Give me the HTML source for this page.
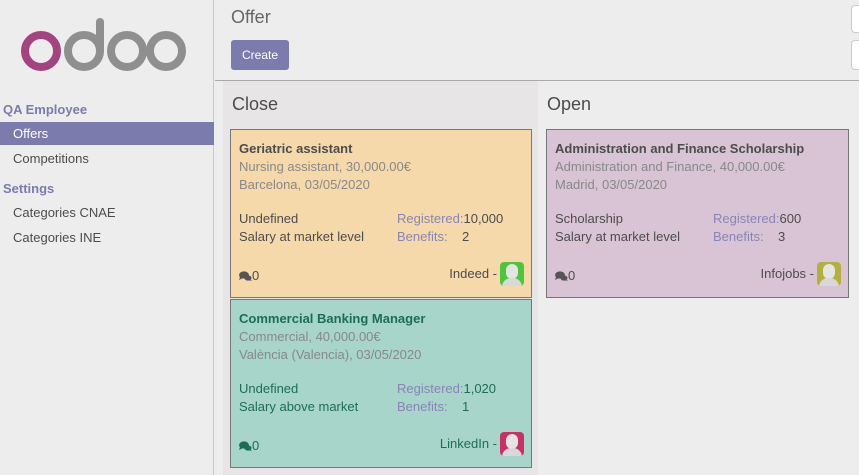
<!DOCTYPE html>
<html><head><meta charset="utf-8"><style>
*{box-sizing:border-box;margin:0;padding:0}
body{width:859px;height:475px;overflow:hidden;background:#eeedee;font-family:"Liberation Sans",sans-serif;font-size:13px;color:#4c4c4c;position:relative}
.side{position:absolute;left:0;top:0;width:214px;height:475px;border-right:1px solid #c9c9c9}
.sec{position:absolute;left:3px;font-weight:bold;color:#7c7bad;font-size:13px}
.item{position:absolute;left:13px;font-size:13px;color:#4c4c4c}
.act{position:absolute;left:0;top:122px;width:214px;height:23px;background:#7c7bad}
.hdr{position:absolute;left:215px;top:0;right:0;height:81px;border-bottom:1px solid #a9a9a9}
.btn{position:absolute;left:16px;top:40px;width:58px;height:30px;background:#7c7bad;color:#fff;border-radius:3px;font-size:12px;line-height:30px;text-align:center}
.col{position:absolute;top:81px;height:394px}
.col h2{position:absolute;left:9px;top:13px;font-size:18px;font-weight:normal;color:#4c4c4c}
.card{position:absolute;border:1px solid #777;padding:10px 8px;line-height:18px}
.card b{display:block;font-size:13px}
.g{color:#888}
.l{color:#8a84b6}
.row{position:absolute;left:8px}
.foot{position:absolute;left:8px;bottom:12px;display:flex;align-items:center}
.src{position:absolute;right:7px;bottom:11px;display:flex;align-items:center;gap:3px}
.av{width:24px;height:24px;border-radius:4px;position:relative;overflow:hidden}
.av i{position:absolute;left:6px;top:2px;width:12px;height:15px;border-radius:6px;background:#e4e4e4}
.av u{position:absolute;left:2px;top:16px;width:20px;height:12px;border-radius:9px 9px 0 0;background:#d8d8d8}
</style></head><body>
<div class="side">
<svg style="position:absolute;left:20px;top:18px" width="170" height="55" viewBox="0 0 170 55">
<circle cx="21" cy="33" r="16" fill="none" stroke="#a3437f" stroke-width="8"/>
<circle cx="64" cy="33" r="16" fill="none" stroke="#8f8f8f" stroke-width="8"/>
<line x1="80" y1="4" x2="80" y2="33" stroke="#8f8f8f" stroke-width="8" stroke-linecap="round"/>
<circle cx="107" cy="33" r="16" fill="none" stroke="#8f8f8f" stroke-width="8"/>
<circle cx="146" cy="33" r="16" fill="none" stroke="#8f8f8f" stroke-width="8"/>
</svg>
<div class="sec" style="top:102px">QA Employee</div>
<div class="act"></div>
<div class="item" style="top:126px;color:#fff">Offers</div>
<div class="item" style="top:151px">Competitions</div>
<div class="sec" style="top:181px">Settings</div>
<div class="item" style="top:205px">Categories CNAE</div>
<div class="item" style="top:230px">Categories INE</div>
</div>
<div class="hdr">
<div style="position:absolute;left:16px;top:7px;font-size:18px;color:#666">Offer</div>
<div class="btn">Create</div>
<div style="position:absolute;left:636px;top:5px;width:20px;height:28px;border:1px solid #ccc;border-right:none;border-radius:4px 0 0 4px;background:#fff"></div>
<div style="position:absolute;left:636px;top:40px;width:20px;height:30px;border:1px solid #ccc;border-right:none;border-radius:4px 0 0 4px;background:#fff"></div>
</div>
<div class="col" style="left:223px;width:315px;background:#e7e5e5"><h2>Close</h2>
<div class="card" style="left:7px;top:48px;width:302px;height:169px;background:#f5d9ab">
<b>Geriatric assistant</b><div class="g">Nursing assistant, 30,000.00€</div><div class="g">Barcelona, 03/05/2020</div>
<div class="row" style="top:80px">Undefined<br>Salary at market level</div>
<div class="row" style="left:166px;top:80px"><span class="l">Registered:</span>10,000<br><span class="l">Benefits:</span>&nbsp;&nbsp;&nbsp; 2</div>
<div class="foot"><svg width="13" height="11" viewBox="0 0 13 11"><ellipse cx="5" cy="4" rx="5" ry="3.6" fill="#555"/><path d="M1 6 L0 9 L4 7Z" fill="#555"/><ellipse cx="9" cy="7" rx="3.5" ry="2.6" fill="#555"/><path d="M11 8 L13 10 L9 9Z" fill="#555"/></svg>0</div>
<div class="src">Indeed -<div class="av" style="background:#4ec63c"><i></i><u></u></div></div>
</div>
<div class="card" style="left:7px;top:218px;width:302px;height:169px;background:#a7d5c9;color:#1b6e54">
<b>Commercial Banking Manager</b><div class="g">Commercial, 40,000.00€</div><div class="g">València (Valencia), 03/05/2020</div>
<div class="row" style="top:80px">Undefined<br>Salary above market</div>
<div class="row" style="left:166px;top:80px"><span class="l">Registered:</span>1,020<br><span class="l">Benefits:</span>&nbsp;&nbsp;&nbsp; 1</div>
<div class="foot"><svg width="13" height="11" viewBox="0 0 13 11"><ellipse cx="5" cy="4" rx="5" ry="3.6" fill="#1b6e54"/><path d="M1 6 L0 9 L4 7Z" fill="#1b6e54"/><ellipse cx="9" cy="7" rx="3.5" ry="2.6" fill="#1b6e54"/><path d="M11 8 L13 10 L9 9Z" fill="#1b6e54"/></svg>0</div>
<div class="src">LinkedIn -<div class="av" style="background:#cc2e66"><i></i><u></u></div></div>
</div>
</div>
<div class="col" style="left:538px;width:321px"><h2>Open</h2>
<div class="card" style="left:8px;top:48px;width:303px;height:169px;background:#d9c4d5">
<b>Administration and Finance Scholarship</b><div class="g">Administration and Finance, 40,000.00€</div><div class="g">Madrid, 03/05/2020</div>
<div class="row" style="top:80px">Scholarship<br>Salary at market level</div>
<div class="row" style="left:166px;top:80px"><span class="l">Registered:</span>600<br><span class="l">Benefits:</span>&nbsp;&nbsp;&nbsp; 3</div>
<div class="foot"><svg width="13" height="11" viewBox="0 0 13 11"><ellipse cx="5" cy="4" rx="5" ry="3.6" fill="#555"/><path d="M1 6 L0 9 L4 7Z" fill="#555"/><ellipse cx="9" cy="7" rx="3.5" ry="2.6" fill="#555"/><path d="M11 8 L13 10 L9 9Z" fill="#555"/></svg>0</div>
<div class="src">Infojobs -<div class="av" style="background:#b3b03e"><i></i><u></u></div></div>
</div>
</div>
</body></html>
